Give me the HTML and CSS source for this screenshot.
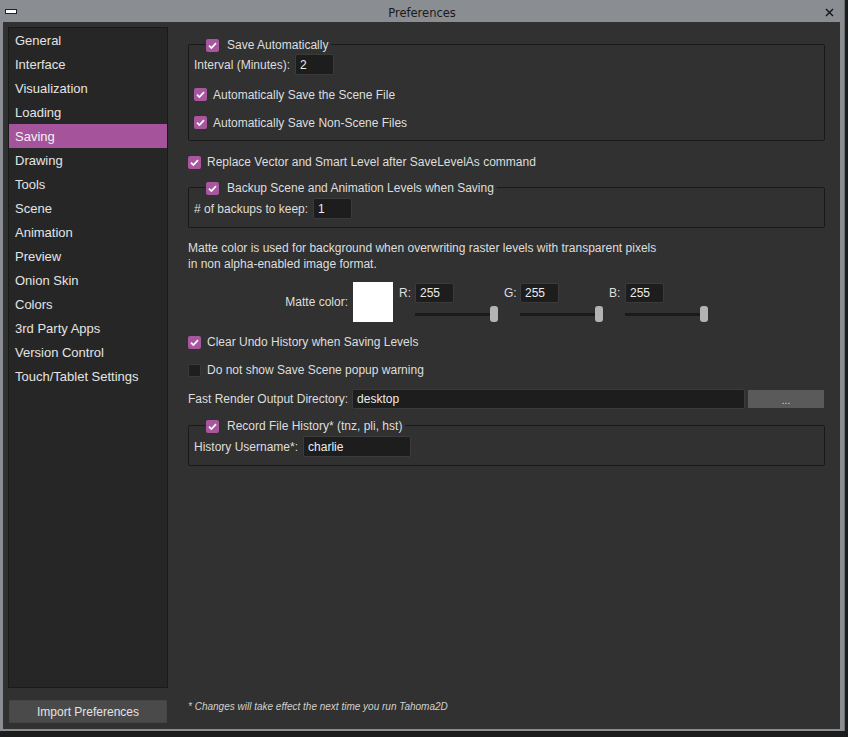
FILE: index.html
```html
<!DOCTYPE html>
<html>
<head>
<meta charset="utf-8">
<title>Preferences</title>
<link rel="stylesheet" href="styles.css">
</head>
<body>
<div class="window">
  <div class="titlebar">
    <div class="tb-left"><span class="min-btn"></span></div>
    <div class="title">Preferences</div>
    <div class="tb-right">
      <svg class="close-btn" width="9" height="9" viewBox="0 0 9 9"><path d="M1 1 L8 8 M8 1 L1 8" stroke="#151515" stroke-width="1.4" fill="none"/></svg>
    </div>
  </div>
  <div class="content">
    <div class="left">
      <ul class="nav">
        <li>General</li>
        <li>Interface</li>
        <li>Visualization</li>
        <li>Loading</li>
        <li class="active">Saving</li>
        <li>Drawing</li>
        <li>Tools</li>
        <li>Scene</li>
        <li>Animation</li>
        <li>Preview</li>
        <li>Onion Skin</li>
        <li>Colors</li>
        <li>3rd Party Apps</li>
        <li>Version Control</li>
        <li>Touch/Tablet Settings</li>
      </ul>
      <div class="import-btn">Import Preferences</div>
    </div>
    <div class="right">
      <fieldset class="group g1">
        <legend><span class="cb on"><svg width="13" height="13" viewBox="0 0 13 13"><path d="M3 6.6 L5.4 9 L10 4.2" stroke="#fff" stroke-width="1.7" fill="none"/></svg></span>Save Automatically</legend>
        <div class="row"><span>Interval (Minutes):</span><span class="field w39">2</span></div>
        <div class="row check gap8"><span class="cb on"><svg width="13" height="13" viewBox="0 0 13 13"><path d="M3 6.6 L5.4 9 L10 4.2" stroke="#fff" stroke-width="1.7" fill="none"/></svg></span>Automatically Save the Scene File</div>
        <div class="row check gap7"><span class="cb on"><svg width="13" height="13" viewBox="0 0 13 13"><path d="M3 6.6 L5.4 9 L10 4.2" stroke="#fff" stroke-width="1.7" fill="none"/></svg></span>Automatically Save Non-Scene Files</div>
      </fieldset>

      <div class="row check top-check replace"><span class="cb on"><svg width="13" height="13" viewBox="0 0 13 13"><path d="M3 6.6 L5.4 9 L10 4.2" stroke="#fff" stroke-width="1.7" fill="none"/></svg></span>Replace Vector and Smart Level after SaveLevelAs command</div>

      <fieldset class="group g2">
        <legend><span class="cb on"><svg width="13" height="13" viewBox="0 0 13 13"><path d="M3 6.6 L5.4 9 L10 4.2" stroke="#fff" stroke-width="1.7" fill="none"/></svg></span>Backup Scene and Animation Levels when Saving</legend>
        <div class="row"><span># of backups to keep:</span><span class="field w39">1</span></div>
      </fieldset>

      <p class="matte-note">Matte color is used for background when overwriting raster levels with transparent pixels<br>in non alpha-enabled image format.</p>

      <div class="matte-row">
        <span class="matte-label">Matte color:</span>
        <span class="swatch"></span>
        <div class="channels">
          <div class="channel">
            <div class="ch-top"><span class="ch-label">R:</span><span class="field ch-field">255</span></div>
            <div class="slider"><span class="track"></span><span class="handle"></span></div>
          </div>
          <div class="channel">
            <div class="ch-top"><span class="ch-label">G:</span><span class="field ch-field">255</span></div>
            <div class="slider"><span class="track"></span><span class="handle"></span></div>
          </div>
          <div class="channel">
            <div class="ch-top"><span class="ch-label">B:</span><span class="field ch-field">255</span></div>
            <div class="slider"><span class="track"></span><span class="handle"></span></div>
          </div>
        </div>
      </div>

      <div class="row check top-check clear-undo"><span class="cb on"><svg width="13" height="13" viewBox="0 0 13 13"><path d="M3 6.6 L5.4 9 L10 4.2" stroke="#fff" stroke-width="1.7" fill="none"/></svg></span>Clear Undo History when Saving Levels</div>
      <div class="row check top-check no-popup"><span class="cb"></span>Do not show Save Scene popup warning</div>

      <div class="row fast-render">
        <span>Fast Render Output Directory:</span>
        <span class="field grow">desktop</span>
        <span class="browse-btn">...</span>
      </div>

      <fieldset class="group g3">
        <legend><span class="cb on"><svg width="13" height="13" viewBox="0 0 13 13"><path d="M3 6.6 L5.4 9 L10 4.2" stroke="#fff" stroke-width="1.7" fill="none"/></svg></span>Record File History* (tnz, pli, hst)</legend>
        <div class="row"><span>History Username*:</span><span class="field w108">charlie</span></div>
      </fieldset>

      <p class="footnote">* Changes will take effect the next time you run Tahoma2D</p>
    </div>
  </div>
</div>
</body>
</html>
```

FILE: styles.css
```css
* { box-sizing: border-box; }

html, body {
  margin: 0;
  padding: 0;
  background: #1c1c1c;
}

body {
  width: 848px;
  height: 737px;
  overflow: hidden;
  font-family: "Liberation Sans", Arial, sans-serif;
  font-size: 12px;
  color: #dedede;
}

.window {
  width: 845px;
  height: 731px;
  background: #8a8d91;
  border-right: 1px solid #6c6f72;
  display: flex;
  flex-direction: column;
}

.titlebar {
  height: 22px;
  display: grid;
  grid-template-columns: 1fr auto 1fr;
  align-items: center;
}

.tb-left { display: flex; align-items: center; }

.min-btn {
  margin-left: 5px;
  width: 12px;
  height: 5px;
  background: #ffffff;
  border: 1px solid #222;
  margin-top: 1px;
}

.title {
  font-family: "DejaVu Sans", sans-serif;
  font-size: 11.5px;
  color: #1a1a1a;
  padding-top: 3px;
}

.tb-right { display: flex; justify-content: flex-end; align-items: center; }

.close-btn { margin-right: 10px; margin-top: 2px; }

.content {
  margin: 0 4px 0 3px;
  height: 707px;
  background: #313131;
  display: flex;
  padding: 5px 0 5px 5px;
}

.left {
  width: 160px;
  display: flex;
  flex-direction: column;
}

.nav {
  list-style: none;
  margin: 0;
  padding: 0;
  height: 661px;
  background: #262626;
  border: 1px solid #1a1a1a;
  font-size: 13px;
  color: #e4e4e4;
}

.nav li {
  height: 24px;
  line-height: 23px;
  padding-top: 1px;
  padding-left: 6px;
}

.nav li.active {
  background: #a5539b;
  color: #f2f2f2;
}

.import-btn {
  margin-top: 12px;
  margin-left: 1px;
  width: 158px;
  height: 23px;
  background: #4a4a4a;
  border: 1px solid #444;
  font-size: 12px;
  color: #e4e4e4;
  display: flex;
  align-items: center;
  justify-content: center;
  padding-top: 1px;
}

.right {
  margin-left: 20px;
  width: 637px;
  display: flex;
  flex-direction: column;
  padding-top: 10px;
}

.group {
  margin: 0;
  min-width: 0;
  border: 1px solid #191919;
  border-radius: 2px;
  padding: 3px 5px 8px 5px;
  display: flex;
  flex-direction: column;
}

.group legend {
  margin-left: 12px;
  padding: 2px 3px 0 0;
  height: 14px;
  line-height: 12px;
  display: flex;
  align-items: center;
  gap: 8px;
}

.g2 { margin-top: 9px; padding-top: 4px; }
.g3 { margin-top: 9px; padding-top: 4px; }

.row {
  display: flex;
  align-items: center;
  height: 21px;
  gap: 5px;
}

.row.check { gap: 6px; padding-top: 2px; }
.gap8 { margin-top: 8px; }
.gap7 { margin-top: 7px; }

.top-check { height: 20px; }
.replace { margin-top: 10px; }
.clear-undo { margin-top: 9px; }
.no-popup { margin-top: 8px; }

.cb {
  width: 13px;
  height: 13px;
  flex: none;
  border-radius: 2px;
  background: #1e1e1e;
  border: 1px solid #3a3a3a;
  display: inline-flex;
}

.cb.on {
  background: #a8579f;
  border: none;
}

.field {
  height: 21px;
  background: #1d1d1d;
  border: 1px solid #3b3b3b;
  border-radius: 2px;
  padding: 0 4px;
  display: flex;
  align-items: center;
  color: #ececec;
  font-size: 12px;
}

.w39 { width: 39px; }
.w108 { width: 108px; }
.grow { flex: 1; height: 20px; }

.matte-note {
  margin: 12px 0 0 0;
  line-height: 16px;
}

.matte-row {
  margin-top: 10px;
  height: 40px;
  display: flex;
  align-items: center;
}

.matte-label {
  width: 160px;
  text-align: right;
}

.swatch {
  margin-left: 5px;
  width: 40px;
  height: 40px;
  background: #ffffff;
}

.channels {
  margin-left: 6px;
  display: flex;
  gap: 5px;
  align-self: flex-start;
  padding-top: 1px;
}

.channel {
  width: 100px;
  display: flex;
  flex-direction: column;
}

.ch-top {
  display: flex;
  align-items: center;
  height: 20px;
}

.ch-label { width: 16px; }

.ch-field {
  width: 39px;
  height: 20px;
}

.slider {
  margin-top: 3px;
  margin-left: 16px;
  height: 16px;
  display: flex;
  align-items: center;
}

.track {
  width: 79px;
  height: 3px;
  background: #1a1a1a;
}

.handle {
  width: 8px;
  height: 16px;
  margin-left: -4px;
  border-radius: 3px;
  background: #b3b3b3;
}

.fast-render {
  margin-top: 10px;
  height: 20px;
  gap: 4px;
}

.browse-btn {
  width: 76px;
  height: 18px;
  margin-left: -1px;
  margin-right: 1px;
  background: #5a5a5a;
  font-size: 10px;
  color: #dddddd;
  display: flex;
  justify-content: center;
  align-items: flex-end;
  padding-bottom: 2px;
  line-height: 10px;
}

.footnote {
  margin: auto 0 10px 0;
  font-size: 10px;
  line-height: 14px;
  font-style: italic;
  color: #d0d0d0;
}
```
